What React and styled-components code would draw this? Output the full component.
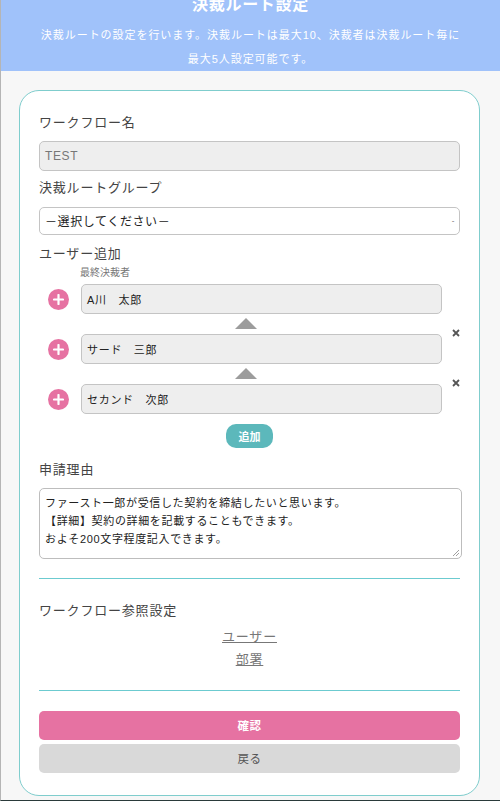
// App.jsx
import React from "react";
import styled, { createGlobalStyle } from "styled-components";

const GlobalStyle = createGlobalStyle`
  html, body {
    margin: 0;
    padding: 0;
    height: 801px;
    overflow: hidden;
    background: #f7f7f7;
  }
  * {
    box-sizing: border-box;
  }
`;

const Page = styled.div`
  height: 801px;
  overflow: hidden;
  background-color: #f7f7f7;
  border-left: 1px solid #b5b5b5;
  border-bottom: 1px solid #2a3a3a;
  font-family: "Liberation Sans", "Noto Sans CJK JP", sans-serif;
  color: #444;
`;

const Header = styled.header`
  height: 71px;
  background-color: #a0c2fa;
  color: #fff;
  text-align: center;
  display: flex;
  flex-direction: column;
  align-items: center;
`;

const Title = styled.h1`
  margin: -8px 0 0;
  height: 26px;
  line-height: 26px;
  font-size: 16px;
  font-weight: 700;
  letter-spacing: 0.7px;
`;

const Lead = styled.p`
  margin: 5px 0 0;
  font-size: 11px;
  line-height: 24px;
  letter-spacing: 0.95px;
`;

const Card = styled.main`
  margin: 19px 20px 0 18px;
  height: 706px;
  padding: 20px 19px 0 19px;
  background-color: #fff;
  border: 1px solid #7fcdcd;
  border-radius: 20px;
`;

const Label = styled.div`
  font-size: 13px;
  line-height: 24px;
  letter-spacing: 0.8px;
  color: #444;
  margin-top: ${(p) => p.$top || 0}px;
`;

const TextBox = styled.div`
  height: ${(p) => p.$height || 30}px;
  display: flex;
  align-items: center;
  justify-content: space-between;
  padding: 0 4px 1px 5px;
  font-size: 12px;
  letter-spacing: 0.6px;
  border: 1px solid #c4c4c4;
  border-radius: 5px;
  background-color: ${(p) => (p.$disabled ? "#eeeeee" : "#fff")};
  color: ${(p) => (p.$muted ? "#777" : "#222")};
  margin-top: ${(p) => p.$top || 0}px;
`;

const Caret = styled.span`
  font-size: 8px;
  color: #666;
`;

const SmallNote = styled.div`
  font-size: 10px;
  line-height: 14px;
  color: #777;
  margin: 0 0 4px 41px;
`;

const UserList = styled.div`
  display: flex;
  flex-direction: column;
  margin-left: 9px;
`;

const UserRow = styled.div`
  display: grid;
  grid-template-columns: 21px 361px 1fr;
  column-gap: 12px;
  align-items: center;
`;

const PlusButton = styled.button`
  width: 21px;
  height: 21px;
  padding: 0;
  border: none;
  border-radius: 50%;
  background-color: #e672a2;
  display: flex;
  align-items: center;
  justify-content: center;
`;

const UserInput = styled(TextBox)`
  color: #222;
  font-size: 11px;
  letter-spacing: 0.7px;
`;

const RemoveIcon = styled.svg`
  width: 8px;
  height: 8px;
  margin-left: -2px;
  align-self: start;
  transform: translateY(-5px);
`;

const Arrow = styled.div`
  width: 0;
  height: 0;
  margin: 4px 0 5px 187px;
  border-left: 11px solid transparent;
  border-right: 11px solid transparent;
  border-bottom: 11px solid #9c9c9c;
`;

const AddRow = styled.div`
  display: flex;
  justify-content: center;
  margin: 10px 0 0;
`;

const AddButton = styled.button`
  width: 47px;
  height: 24px;
  padding: 0;
  border: none;
  border-radius: 10px;
  background-color: #5cb8bb;
  color: #fff;
  font-family: inherit;
  font-size: 11px;
  font-weight: 700;
`;

const ReasonBox = styled.div`
  position: relative;
  width: 423px;
  height: 71px;
  margin-top: 6px;
  padding: 5px 5px;
  font-size: 11px;
  line-height: 18px;
  letter-spacing: 0.65px;
  color: #222;
  background-color: #fff;
  border: 1px solid #bdbdbd;
  border-radius: 5px;
`;

const ResizeGrip = styled.svg`
  position: absolute;
  right: 1px;
  bottom: 1px;
  width: 8px;
  height: 8px;
`;

const Rule = styled.div`
  height: 1px;
  margin-top: ${(p) => p.$top}px;
  background-color: #6ccbd0;
`;

const LinkGroup = styled.div`
  display: flex;
  flex-direction: column;
  align-items: center;
  margin-top: 2px;
`;

const RefLink = styled.a`
  font-size: 13px;
  line-height: 23px;
  letter-spacing: 0.8px;
  color: #777;
  text-decoration: underline;
`;

const ActionButton = styled.button`
  display: block;
  width: 100%;
  height: ${(p) => p.$height}px;
  margin-top: ${(p) => p.$top}px;
  padding: 0 0 2px;
  border: none;
  border-radius: 5px;
  background-color: ${(p) => p.$bg};
  color: ${(p) => p.$fg};
  font-family: inherit;
  font-size: 11.5px;
  font-weight: ${(p) => p.$weight || 400};
  letter-spacing: 0.4px;
`;

const PlusIcon = () => (
  <svg width="11" height="11" viewBox="0 0 11 11">
    <path d="M5.5 1v9M1 5.5h9" stroke="#fff" strokeWidth="2.2" strokeLinecap="round" />
  </svg>
);

const users = [
  { name: "A川　太郎", removable: false },
  { name: "サード　三郎", removable: true },
  { name: "セカンド　次郎", removable: true },
];

const App = () => {
  return (
    <Page>
      <GlobalStyle />
      <Header>
        <Title>決裁ルート設定</Title>
        <Lead>
          決裁ルートの設定を行います。決裁ルートは最大10、決裁者は決裁ルート毎に
          <br />
          最大5人設定可能です。
        </Lead>
      </Header>
      <Card>
        <Label>ワークフロー名</Label>
        <TextBox $disabled $muted $top={6}>TEST</TextBox>
        <Label $top={5}>決裁ルートグループ</Label>
        <TextBox $height={28} $top={7}>
          <span>－選択してください－</span>
          <Caret>-</Caret>
        </TextBox>
        <Label $top={7}>ユーザー追加</Label>
        <SmallNote>最終決裁者</SmallNote>
        <UserList>
          {users.map((user, i) => (
            <React.Fragment key={user.name}>
              {i > 0 && <Arrow />}
              <UserRow>
                <PlusButton type="button"><PlusIcon /></PlusButton>
                <UserInput $disabled>{user.name}</UserInput>
                {user.removable && (
                  <RemoveIcon viewBox="0 0 8 8">
                    <path d="M1 1l6 6M7 1L1 7" stroke="#555" strokeWidth="1.8" />
                  </RemoveIcon>
                )}
              </UserRow>
            </React.Fragment>
          ))}
        </UserList>
        <AddRow>
          <AddButton type="button">追加</AddButton>
        </AddRow>
        <Label $top={10}>申請理由</Label>
        <ReasonBox>
          ファースト一郎が受信した契約を締結したいと思います。
          <br />
          【詳細】契約の詳細を記載することもできます。
          <br />
          およそ200文字程度記入できます。
          <ResizeGrip viewBox="0 0 8 8">
            <path d="M1 7l6-6M4 7l3-3" stroke="#888" strokeWidth="0.8" />
          </ResizeGrip>
        </ReasonBox>
        <Rule $top={19} />
        <Label $top={20}>ワークフロー参照設定</Label>
        <LinkGroup>
          <RefLink>ユーザー</RefLink>
          <RefLink>部署</RefLink>
        </LinkGroup>
        <Rule $top={19} />
        <ActionButton $height={29} $top={20} $bg="#e672a2" $fg="#fff" $weight={700}>確認</ActionButton>
        <ActionButton $height={29} $top={4} $bg="#d9d9d9" $fg="#555">戻る</ActionButton>
      </Card>
    </Page>
  );
};

export default App;
